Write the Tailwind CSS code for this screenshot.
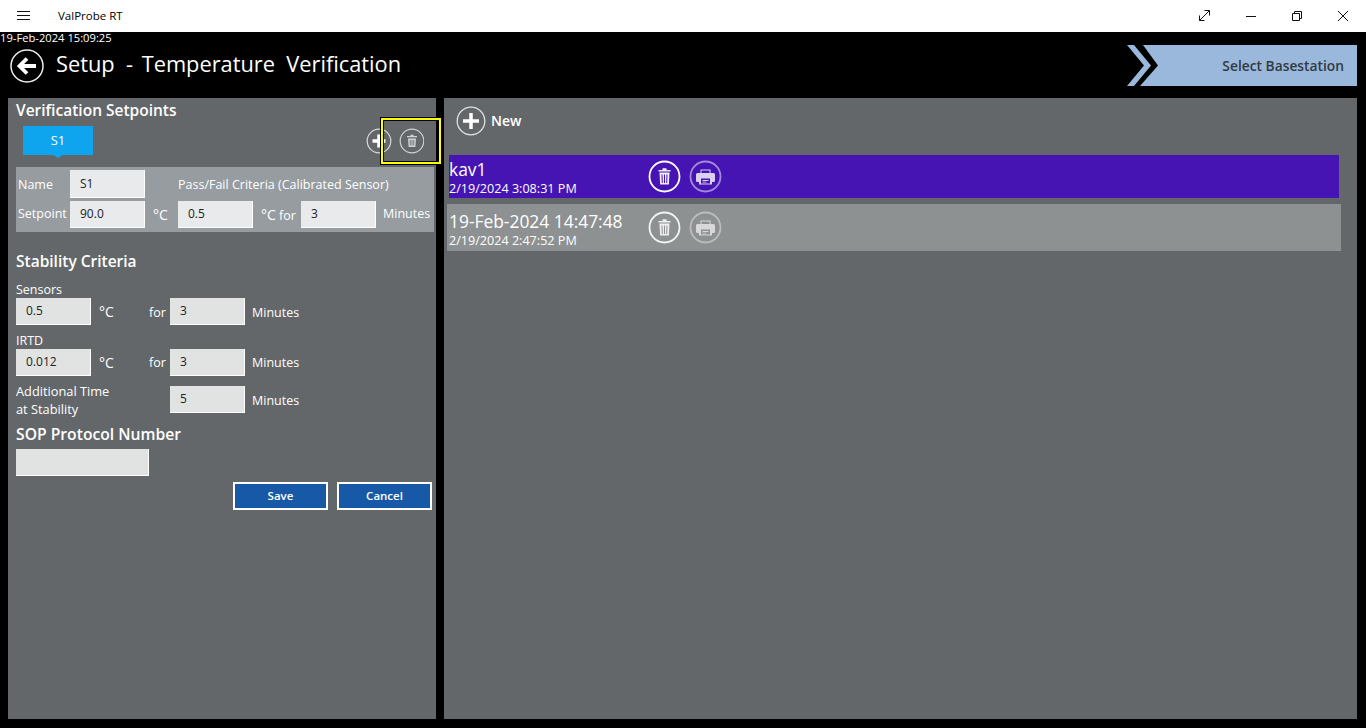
<!DOCTYPE html>
<html lang="en">

<head>
    <meta charset="utf-8" />
    <meta name="viewport" content="width=device-width, initial-scale=1" />
    <title>ValProbe RT</title>
    <script src="https://cdn.jsdelivr.net/npm/@tailwindcss/browser@4"></script>
</head>

<body class="bg-black font-['Open_Sans',sans-serif] text-white overflow-hidden">
    <div class="h-[728px] w-[1366px] flex flex-col">
        <!-- title bar -->
        <div class="h-8 bg-white text-black flex items-center shrink-0">
            <svg class="ml-[17px] w-[13px] h-[10px]" viewBox="0 0 13 10" stroke="#111" stroke-width="1"><path d="M0 .5h13M0 4.500h13M0 8.500h13" /></svg>
            <span class="ml-[28px] text-[11.500px]">ValProbe RT</span>
            <div class="ml-auto flex items-center">
                <svg class="w-[46px] h-8" viewBox="0 0 46 32" fill="none" stroke="#111"><path d="M17.500 20.500l10-10M22.500 10.500h5v5M17.500 15.500v5h5" /></svg>
                <svg class="w-[46px] h-8" viewBox="0 0 46 32" fill="none" stroke="#111"><path d="M18 16.500h10" /></svg>
                <svg class="w-[46px] h-8" viewBox="0 0 46 32" fill="none" stroke="#111"><path d="M18.500 13.500h7v7h-7zM20.500 13.500v-2h7v7h-2" /></svg>
                <svg class="w-[46px] h-8" viewBox="0 0 46 32" fill="none" stroke="#111"><path d="M18 11l10 10M28 11l-10 10" /></svg>
            </div>
        </div>

        <!-- header -->
        <div class="h-[66px] shrink-0 flex flex-col">
            <div class="h-[12px] text-[11.200px] leading-[12px] whitespace-nowrap">19-Feb-2024 15:09:25</div>
            <div class="flex items-start">
                <svg class="ml-[10px] mt-[5px] w-[34px] h-[34px]" viewBox="0 0 34 34" fill="none" stroke="#fff">
                    <circle cx="17" cy="17" r="16" stroke="#eee" stroke-width="1.500" />
                    <path d="M26 17H10M17 9.500L9.500 17l7.500 7.500" stroke-width="3.800" />
                </svg>
                <div class="ml-3 mt-[3px] text-[21.800px] leading-[34px] whitespace-pre">Setup  - <span class="ml-[3px]">Temperature  Verification</span></div>
                <div class="ml-auto mr-[9px] mt-px relative w-[231px] h-[41px]">
                    <svg class="w-[231px] h-[41px]" viewBox="0 0 231 41">
                        <polygon points="1,0 8,0 25,20.500 8,41 1,41 18,20.500" fill="#99b8dc" />
                        <polygon points="17,0 231,0 231,41 14,41 32,20.500" fill="#99b8dc" />
                    </svg>
                    <span class="absolute right-[13px] top-[10px] text-[13.800px] leading-[21px] font-semibold text-[#333a42]">Select Basestation</span>
                </div>
            </div>
        </div>

        <!-- body -->
        <div class="flex gap-2 px-2 h-[621px]">
            <div class="relative w-[428px] bg-[#63676a] px-2 shrink-0">
                <div class="h-[24px] pt-px text-[15.500px] leading-[22px] font-semibold">Verification Setpoints</div>

                <div class="flex items-start h-[45px]">
                    <div class="relative ml-[7px] mt-1 w-[70px] h-[29px] bg-[#0ea5ee] text-[13px] flex items-center justify-center">
                        S1
                        <span class="absolute left-[30px] top-[29px] border-x-[5px] border-t-[3px] border-x-transparent border-t-[#0ea5ee]"></span>
                    </div>
                    <svg class="ml-auto mr-[4px] mt-[6px] w-[58px] h-[26px]" viewBox="0 0 58 26" fill="none">
                        <circle cx="13" cy="13" r="11.800" stroke="#d8dada" stroke-width="1.200" />
                        <path d="M13 6.500v13M6.500 13h13" stroke="#fff" stroke-width="3.500" />
                        <circle cx="46" cy="13" r="11.800" stroke="#d0d3d3" stroke-width="1.200" />
                        <path fill-rule="evenodd" d="M41 8h10v1.300H41zM44.500 8V6.800h3V8zM42 10.500h8l-.6 8.500h-6.800zM43.800 12v5.500h.8V12zm1.800 0v5.500h.8V12zm1.800 0v5.500h.8V12z" fill="#d0d3d3" />
                    </svg>
                </div>

                <!-- setpoint band -->
                <div class="bg-[#969c9f] h-[65px] w-[418px] text-[12.500px] pt-[3px]">
                    <div class="flex items-center h-[28px]">
                        <span class="w-[54px] pl-[2px] pt-[2px]">Name</span>
                        <span class="w-[75px] h-[28px] bg-[#e8eaec] border-r border-b border-white text-[#222] text-[12px] pl-[10px] pt-[5px]">S1</span>
                        <span class="ml-[33px] pt-[2px] whitespace-nowrap">Pass/Fail Criteria (Calibrated Sensor)</span>
                    </div>
                    <div class="flex items-center h-[27px] mt-[3px]">
                        <span class="w-[54px] pl-[2px]">Setpoint</span>
                        <span class="w-[75px] h-[27px] bg-[#e8eaec] border-r border-b border-white text-[#222] text-[12px] pl-[10px] pt-[4px]">90.0</span>
                        <span class="w-[33px] pl-2 text-[14px]">°C</span>
                        <span class="w-[75px] h-[27px] bg-[#e8eaec] border-r border-b border-white text-[#222] text-[12px] pl-[10px] pt-[4px]">0.5</span>
                        <span class="w-[48px] pl-2 whitespace-nowrap"><span class="text-[14px]">°C</span> for</span>
                        <span class="w-[75px] h-[27px] bg-[#e8eaec] border-r border-b border-white text-[#222] text-[12px] pl-[10px] pt-[4px]">3</span>
                        <span class="pl-[7px]">Minutes</span>
                    </div>
                </div>

                <!-- stability -->
                <div class="mt-[17px] h-[24px] text-[15.500px] leading-[24px] font-semibold">Stability Criteria</div>
                <div class="mt-[8px] h-[17px] text-[12.500px] leading-[18px]">Sensors</div>
                <div class="flex items-center h-[27px] text-[12.500px]">
                    <span class="w-[75px] h-[27px] bg-[#e1e3e2] border-r border-b border-white text-[#222] text-[12px] pl-[10px] pt-[4px]">0.5</span>
                    <span class="w-[58px] pl-2 text-[14px]">°C</span>
                    <span class="w-[21px] pt-[4px]">for</span>
                    <span class="w-[75px] h-[27px] bg-[#e1e3e2] border-r border-b border-white text-[#222] text-[12px] pl-[10px] pt-[4px]">3</span>
                    <span class="pl-[7px] pt-[4px]">Minutes</span>
                </div>
                <div class="mt-[6px] h-[18px] text-[12.500px] leading-[20px]">IRTD</div>
                <div class="flex items-center h-[27px] text-[12.500px]">
                    <span class="w-[75px] h-[27px] bg-[#e1e3e2] border-r border-b border-white text-[#222] text-[12px] pl-[10px] pt-[4px]">0.012</span>
                    <span class="w-[58px] pl-2 text-[14px]">°C</span>
                    <span class="w-[21px] pt-[2px]">for</span>
                    <span class="w-[75px] h-[27px] bg-[#e1e3e2] border-r border-b border-white text-[#222] text-[12px] pl-[10px] pt-[4px]">3</span>
                    <span class="pl-[7px] pt-[2px]">Minutes</span>
                </div>
                <div class="flex items-center h-[36px] mt-[6px] text-[12.500px]">
                    <span class="w-[154px] text-[12.800px] leading-[18px]">Additional Time<br />at Stability</span>
                    <span class="w-[75px] h-[27px] -mt-[1px] bg-[#e1e3e2] border-r border-b border-white text-[#222] text-[12px] pl-[10px] pt-[4px]">5</span>
                    <span class="pl-[7px] pt-[2px]">Minutes</span>
                </div>
                <div class="h-[24px] mt-[4px] text-[15.700px] leading-[24px] font-semibold">SOP Protocol Number</div>
                <div class="mt-[3px] w-[133px] h-[27px] bg-[#e1e3e2] border-r border-b border-white"></div>
                <div class="mt-[6px] -mr-[4px] flex justify-end gap-[9px] text-[11.500px] font-semibold">
                    <div class="w-[95px] h-[28px] bg-[#1759a6] border-2 border-white flex items-center justify-center">Save</div>
                    <div class="w-[95px] h-[28px] bg-[#1759a6] border-2 border-white flex items-center justify-center">Cancel</div>
                </div>

                <!-- highlight around the delete button -->
                <div class="absolute left-[373px] top-[20px] w-[60px] h-[46px] border-2 border-[#ffff00] outline outline-black">
                    <div class="w-full h-full border border-black"></div>
                </div>
            </div>

            <div class="w-[913px] bg-[#63676a] shrink-0">
                <div class="h-[57px] flex items-start pl-[12px] pt-[8px]">
                    <svg class="w-[30px] h-[30px]" viewBox="0 0 30 30" fill="none">
                        <circle cx="15" cy="15" r="13.800" stroke="#dfe1e1" stroke-width="1.300" />
                        <path d="M15 7v16M7 15h16" stroke="#fff" stroke-width="3.500" />
                    </svg>
                    <span class="ml-[5px] mt-[5px] text-[14px] leading-[20px] font-semibold">New</span>
                </div>

                <div class="ml-[5px] w-[890px] h-[43px] bg-[#4714b4] flex items-center">
                    <div class="w-[199px] pt-[2px]">
                        <div class="text-[17.400px] leading-[22px] whitespace-nowrap">kav1</div>
                        <div class="mt-px text-[12.600px] leading-[16px] whitespace-nowrap">2/19/2024 3:08:31 PM</div>
                    </div>
                    <svg class="w-[33px] h-[33px]" viewBox="0 0 33 33" fill="none">
                        <circle cx="16.500" cy="16.500" r="15" stroke="#fff" stroke-width="1.800" />
                        <path fill-rule="evenodd" d="M10.500 10h12v1.500h-12zM14.500 10V8.300h4V10zM11.500 12.500h10l-.6 12h-8.800zM13.500 14.500l.3 8.500h1l-.3-8.500zM16 14.500V23h1v-8.500zM18.500 14.500l-.3 8.500h1l.3-8.500z" fill="#f0eef8" />
                    </svg>
                    <svg class="ml-2 w-[33px] h-[33px]" viewBox="0 0 33 33" fill="none">
                        <circle cx="16.500" cy="16.500" r="15" stroke="#fff" stroke-opacity=".5" stroke-width="1.800" />
                        <path fill-rule="evenodd" d="M11.500 9.500h10v3.500h3q1.500 0 1.500 1.500v6q0 1.500-1.500 1.500H23v2.500H10V22H8.500Q7 22 7 20.500v-6Q7 13 8.500 13h3zm1 1V13h8v-2.500zM12 18.500v5h9v-5zM13.500 20h6v1h-6zm0 1.800h4v.8h-4z" fill="#fff" fill-opacity=".8" />
                    </svg>
                </div>

                <div class="mt-[6px] ml-[3px] w-[894px] h-[47px] bg-[#8e9192] flex items-center">
                    <div class="w-[201px] pl-[2px] pt-[4px]">
                        <div class="text-[17.400px] leading-[22px] whitespace-nowrap">19-Feb-2024 14:47:48</div>
                        <div class="mt-px text-[12.600px] leading-[16px] whitespace-nowrap">2/19/2024 2:47:52 PM</div>
                    </div>
                    <svg class="w-[33px] h-[33px]" viewBox="0 0 33 33" fill="none">
                        <circle cx="16.500" cy="16.500" r="15" stroke="#fff" stroke-opacity=".9" stroke-width="1.800" />
                        <path fill-rule="evenodd" d="M10.500 10h12v1.500h-12zM14.500 10V8.300h4V10zM11.500 12.500h10l-.6 12h-8.800zM13.500 14.500l.3 8.500h1l-.3-8.500zM16 14.500V23h1v-8.500zM18.500 14.500l-.3 8.500h1l.3-8.500z" fill="#eee" />
                    </svg>
                    <svg class="ml-2 w-[33px] h-[33px]" viewBox="0 0 33 33" fill="none">
                        <circle cx="16.500" cy="16.500" r="15" stroke="#fff" stroke-opacity=".4" stroke-width="1.800" />
                        <path fill-rule="evenodd" d="M11.500 9.500h10v3.500h3q1.500 0 1.500 1.500v6q0 1.500-1.500 1.500H23v2.500H10V22H8.500Q7 22 7 20.500v-6Q7 13 8.500 13h3zm1 1V13h8v-2.500zM12 18.500v5h9v-5zM13.500 20h6v1h-6zm0 1.800h4v.8h-4z" fill="#fff" fill-opacity=".65" />
                    </svg>
                </div>
            </div>
        </div>
    </div>
</body>

</html>
